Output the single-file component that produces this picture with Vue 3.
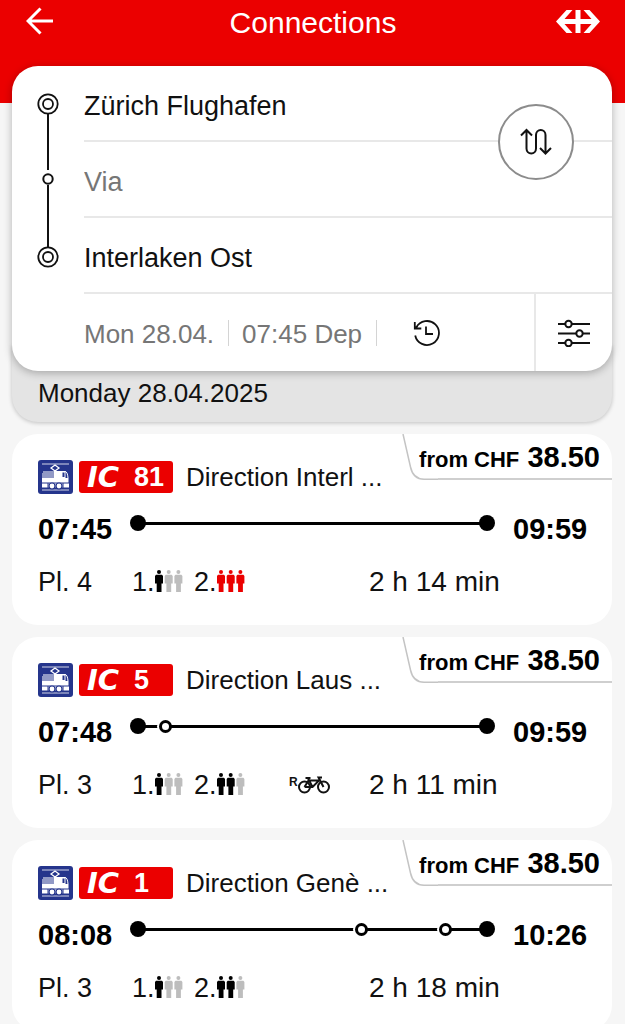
<script setup>
import { ref } from 'vue'

const from = ref('Zürich Flughafen')
const via = ref('')
const to = ref('Interlaken Ost')

const connections = [
  {
    line: '81', direction: 'Direction Interl ...', price: '38.50',
    departure: '07:45', arrival: '09:59', legs: [349],
    platform: 'Pl. 4', first: 1, second: 3, bike: false, duration: '2 h 14 min'
  },
  {
    line: '5', direction: 'Direction Laus ...', price: '38.50',
    departure: '07:48', arrival: '09:59', legs: [28, 321],
    platform: 'Pl. 3', first: 1, second: 2, bike: true, duration: '2 h 11 min'
  },
  {
    line: '1', direction: 'Direction Genè ...', price: '38.50',
    departure: '08:08', arrival: '10:26', legs: [224, 84, 41],
    platform: 'Pl. 3', first: 1, second: 2, bike: false, duration: '2 h 18 min'
  }
]

function personClass(load, n) {
  if (n > load) return 'person free'
  return load === 3 ? 'person full' : 'person'
}
</script>

<template>
  <div class="app">
    <header class="top">
      <button class="icon-button" type="button" aria-label="Back">
        <svg width="28" height="28" viewBox="0 0 28 28" fill="none" stroke="#fff" stroke-width="3">
          <path d="M27 14H2M14.500 1.500L2 14L14.500 26.500" />
        </svg>
      </button>
      <h1>Connections</h1>
      <svg class="brand" width="44" height="23" viewBox="0 0 44 23" fill="#fff" role="img" aria-label="SBB">
        <path d="M0 11.500L10.500 0H16.500L8.500 9H19.500V0H24.500V9H35.500L27.500 0H33.500L44 11.500L33.500 23H27.500L35.500 14H24.500V23H19.500V14H8.500L16.500 23H10.500Z" />
      </svg>
    </header>

    <form class="search" @submit.prevent>
      <svg class="route" width="24" height="176" viewBox="0 0 24 176" fill="none" stroke="#111" stroke-width="1.800" aria-hidden="true">
        <circle cx="12" cy="12" r="9.700" />
        <circle cx="12" cy="12" r="5" />
        <path d="M12 22V78M12 93V155" stroke-width="2" />
        <circle cx="12" cy="87" r="4.700" stroke-width="2" />
        <circle cx="12" cy="165" r="9.700" />
        <circle cx="12" cy="165" r="5" />
      </svg>
      <div class="row"><input v-model="from" type="text" aria-label="From" /></div>
      <div class="row"><input v-model="via" type="text" aria-label="Via" placeholder="Via" /></div>
      <div class="row"><input v-model="to" type="text" aria-label="To" /></div>
      <div class="when">
        <button class="pick" type="button">Mon 28.04.</button>
        <button class="pick" type="button">07:45 Dep</button>
        <button class="icon-button now" type="button" aria-label="Now">
          <svg width="28" height="28" viewBox="0 0 28 28" fill="none" stroke="#111" stroke-width="1.800">
            <path d="M2.200 16.500A12 12 0 1 0 3.300 8.500M1.800 3V9.500H8.300M2 9.300L4.500 7M13 7.500V15H20" />
          </svg>
        </button>
        <button class="icon-button options" type="button" aria-label="Options">
          <svg width="32" height="28" viewBox="0 0 32 28" fill="#fff" stroke="#111" stroke-width="2">
            <path d="M0 5H32M0 14.500H32M0 24H32" />
            <circle cx="10.500" cy="5" r="3.200" />
            <circle cx="21.500" cy="14.500" r="3.200" />
            <circle cx="10.500" cy="24" r="3.200" />
          </svg>
        </button>
      </div>
      <button class="swap" type="button" aria-label="Swap stations">
        <svg width="32" height="28" viewBox="0 0 32 28" fill="none" stroke="#111" stroke-width="2">
          <path d="M6.500 2.500V20.500A4.750 5 0 0 0 16 20.500V7A4.750 5 0 0 1 25.500 7V25M1 7.500L6.500 2L12 7.500M20 20L25.500 25.500L31 20" />
        </svg>
      </button>
    </form>

    <h2 class="day">Monday 28.04.2025</h2>

    <main class="list">
      <article v-for="c in connections" :key="c.line" class="card">
        <div class="price">
          <svg width="36" height="46" viewBox="0 0 36 46" fill="none" stroke="#c4c4c4" stroke-width="1.500" aria-hidden="true">
            <path d="M1 0L8.500 33Q11 45 22 45.200H36" />
          </svg>
          <p>from CHF <b>{{ c.price }}</b></p>
        </div>

        <div class="service">
          <svg width="35" height="34" viewBox="0 0 35 34" role="img" aria-label="Train">
            <rect width="35" height="34" rx="3" fill="#25358c" />
            <path d="M4 4H31M4 30H31" stroke="#fff" stroke-width="0.800" />
            <path d="M13 8L17 5L21 8L17 11Z" fill="none" stroke="#fff" stroke-width="1.300" />
            <path d="M5 12H17M4 14H17M4 16H17" stroke="#fff" stroke-width="1.100" />
            <path d="M16 11H27.500V18H30.500V22.500H4V17.500H16Z" fill="#fff" />
            <path d="M24 11.500H27Q29.500 11.500 30 18" fill="none" stroke="#fff" stroke-width="1" />
            <rect x="24.500" y="12.500" width="2" height="4.500" fill="#25358c" />
            <path d="M4 23.500H31V27.500H4Z" fill="#fff" />
            <g fill="#fff" stroke="#25358c" stroke-width="1.200">
              <circle cx="14" cy="26" r="3" />
              <circle cx="21" cy="26" r="3" />
            </g>
            <path d="M10 23V28M25 23V28" stroke="#25358c" stroke-width="1" />
          </svg>
          <span class="line"><i>IC</i><b>{{ c.line }}</b></span>
          <span class="direction">{{ c.direction }}</span>
        </div>

        <div class="times">
          <time>{{ c.departure }}</time>
          <div class="track" aria-hidden="true">
            <template v-for="(leg, n) in c.legs" :key="n">
              <span v-if="n > 0" class="change"></span>
              <span class="leg" :style="{ flexGrow: leg }"></span>
            </template>
          </div>
          <time class="arrival">{{ c.arrival }}</time>
        </div>

        <div class="facts">
          <span>{{ c.platform }}</span>
          <span class="load">1.<svg width="29" height="22" viewBox="0 0 29 22" role="img" aria-label="First class occupancy">
            <g v-for="n in 3" :key="n" :class="personClass(c.first, n)" :transform="`translate(${(n - 1) * 9.7} 0)`">
              <circle cx="4" cy="2" r="2" />
              <path d="M1 4.700H7L8 6V13.500H6.500V22H1.700V13.500H0V6Z" />
            </g>
          </svg></span>
          <span class="load">2.<svg width="29" height="22" viewBox="0 0 29 22" role="img" aria-label="Second class occupancy">
            <g v-for="n in 3" :key="n" :class="personClass(c.second, n)" :transform="`translate(${(n - 1) * 9.7} 0)`">
              <circle cx="4" cy="2" r="2" />
              <path d="M1 4.700H7L8 6V13.500H6.500V22H1.700V13.500H0V6Z" />
            </g>
          </svg></span>
          <span class="bike">
            <template v-if="c.bike"><sup>R</sup><svg width="32" height="18" viewBox="0 0 32 18" fill="none" stroke="#111" stroke-width="2" role="img" aria-label="Bicycle reservation required">
              <circle cx="6.500" cy="11" r="5.500" />
              <circle cx="25.500" cy="11" r="5.500" />
              <path d="M6.500 11L10.500 4.500H21L14.500 11H6.500M14.500 11L10 2.200M25.500 11L20.500 1.500H24M7.500 2H12.500" />
            </svg></template>
          </span>
          <span class="duration">{{ c.duration }}</span>
        </div>
      </article>
    </main>
  </div>
</template>

<style>
body {
  margin: 0;
}
</style>

<style scoped>
.app {
  box-sizing: border-box;
  display: flex;
  flex-direction: column;
  height: 100vh;
  padding: 0 13px 0 12px;
  overflow: hidden;
  background: linear-gradient(#eb0000 103px, #f6f6f6 103px);
  color: #111;
  font: 300 26px/32px "Liberation Sans", Arial, sans-serif;
}

button,
input {
  margin: 0;
  padding: 0;
  border: 0;
  background: none;
  color: inherit;
  font: inherit;
}

.icon-button {
  display: grid;
  place-items: center;
}

.top {
  flex: none;
  display: grid;
  grid-template-columns: 44px 1fr 44px;
  align-items: center;
  height: 42px;
  padding: 0 12px 24px 14px;
  color: #fff;
}

.top h1 {
  margin: 0;
  padding-top: 4px;
  font-size: 30px;
  font-weight: 300;
  line-height: 36px;
  text-align: center;
}

.top .icon-button {
  justify-self: start;
}

.search {
  position: relative;
  z-index: 1;
  flex: none;
  border-radius: 26px;
  background: #fff;
  box-shadow: 0 2px 8px rgba(0, 0, 0, 0.28);
}

.route {
  position: absolute;
  top: 26px;
  left: 24px;
}

.row {
  margin-left: 72px;
  border-bottom: 2px solid #e8e8e8;
}

.row input {
  display: block;
  box-sizing: border-box;
  width: 100%;
  height: 74px;
  padding: 6px 120px 0 0;
  font-size: 27px;
  outline: 0;
}

.row input::placeholder {
  color: #767676;
  opacity: 1;
}

.when {
  display: flex;
  align-items: center;
  height: 77px;
  padding-left: 72px;
  color: #767676;
}

.pick {
  height: 26px;
  padding-right: 14px;
  border-right: 1px solid #d4d4d4;
  line-height: 28px;
  white-space: nowrap;
}

.pick + .pick {
  padding-left: 13px;
}

.now {
  margin-left: 36px;
}

.options {
  align-self: stretch;
  width: 78px;
  margin-left: auto;
  border-left: 2px solid #e8e8e8;
}

.swap {
  position: absolute;
  top: 38px;
  right: 38px;
  display: grid;
  place-items: center;
  width: 76px;
  height: 76px;
  border: 2px solid #8c8c8c;
  border-radius: 50%;
  background: #fff;
}

.day {
  flex: none;
  margin: -26px 0 12px;
  padding: 32px 26px 13px;
  border-radius: 0 0 26px 26px;
  background: #e4e4e4;
  box-shadow: 0 1px 4px rgba(0, 0, 0, 0.22);
  font-size: 26px;
  font-weight: 300;
  line-height: 32px;
}

.list {
  display: flex;
  flex-direction: column;
  gap: 12px;
  min-height: 0;
  overflow-y: auto;
  scrollbar-width: none;
}

.card {
  position: relative;
  flex: none;
  padding: 26px 25px 27px 26px;
  border-radius: 26px;
  background: #fff;
}

.price {
  position: absolute;
  top: 0;
  right: 0;
  width: 210px;
}

.price svg {
  display: block;
}

.price::after {
  content: "";
  position: absolute;
  top: 44px;
  right: 0;
  left: 36px;
  height: 2px;
  background: #cfcfcf;
}

.price p {
  position: absolute;
  top: 6px;
  right: 12px;
  margin: 0;
  color: #000;
  font: bold 22px/34px "Liberation Sans", Arial, sans-serif;
  white-space: nowrap;
}

.price b {
  margin-left: 2px;
  font-size: 29px;
}

.service {
  display: flex;
  align-items: center;
  height: 34px;
}

.line {
  box-sizing: border-box;
  display: flex;
  align-items: center;
  width: 94px;
  height: 32px;
  margin: 0 13px 0 6px;
  padding-left: 8px;
  border-radius: 3px;
  background: #eb0000;
  color: #fff;
  font: bold 27px/32px "Liberation Sans", Arial, sans-serif;
}

.line i {
  width: 47px;
  font-family: "DejaVu Sans", sans-serif;
  font-size: 29px;
}

.times {
  display: flex;
  margin-top: 18px;
}

.times time {
  width: 74px;
  color: #000;
  font: bold 29px/34px "Liberation Sans", Arial, sans-serif;
}

.times .arrival {
  text-align: right;
}

.track {
  position: relative;
  flex: 1;
  display: flex;
  align-items: center;
  height: 22px;
  margin: 0 26px;
}

.track::before,
.track::after {
  content: "";
  position: absolute;
  left: -8px;
  width: 16px;
  height: 16px;
  border-radius: 50%;
  background: #000;
}

.track::after {
  right: -8px;
  left: auto;
}

.leg {
  flex-basis: 0;
  height: 3px;
  background: #000;
}

.change {
  box-sizing: border-box;
  width: 13px;
  height: 13px;
  margin: 0 -6px 0 -7px;
  border: 3px solid #000;
  border-radius: 50%;
  background: #fff;
  box-shadow: -2px 0 0 #fff;
  z-index: 1;
}

.facts {
  display: grid;
  grid-template-columns: 94px 62px 95px 80px 1fr;
  align-items: center;
  margin-top: 20px;
  font-size: 27px;
  line-height: 32px;
  white-space: nowrap;
}

.load svg {
  vertical-align: -1px;
}

.duration {
  font-size: 28px;
}

.person {
  fill: #000;
}

.person.free {
  fill: #bdbdbd;
}

.person.full {
  fill: #eb0000;
}

.bike {
  display: flex;
  align-items: center;
}

.bike sup {
  align-self: flex-start;
  font: bold 12px/12px "Liberation Sans", Arial, sans-serif;
}
</style>
